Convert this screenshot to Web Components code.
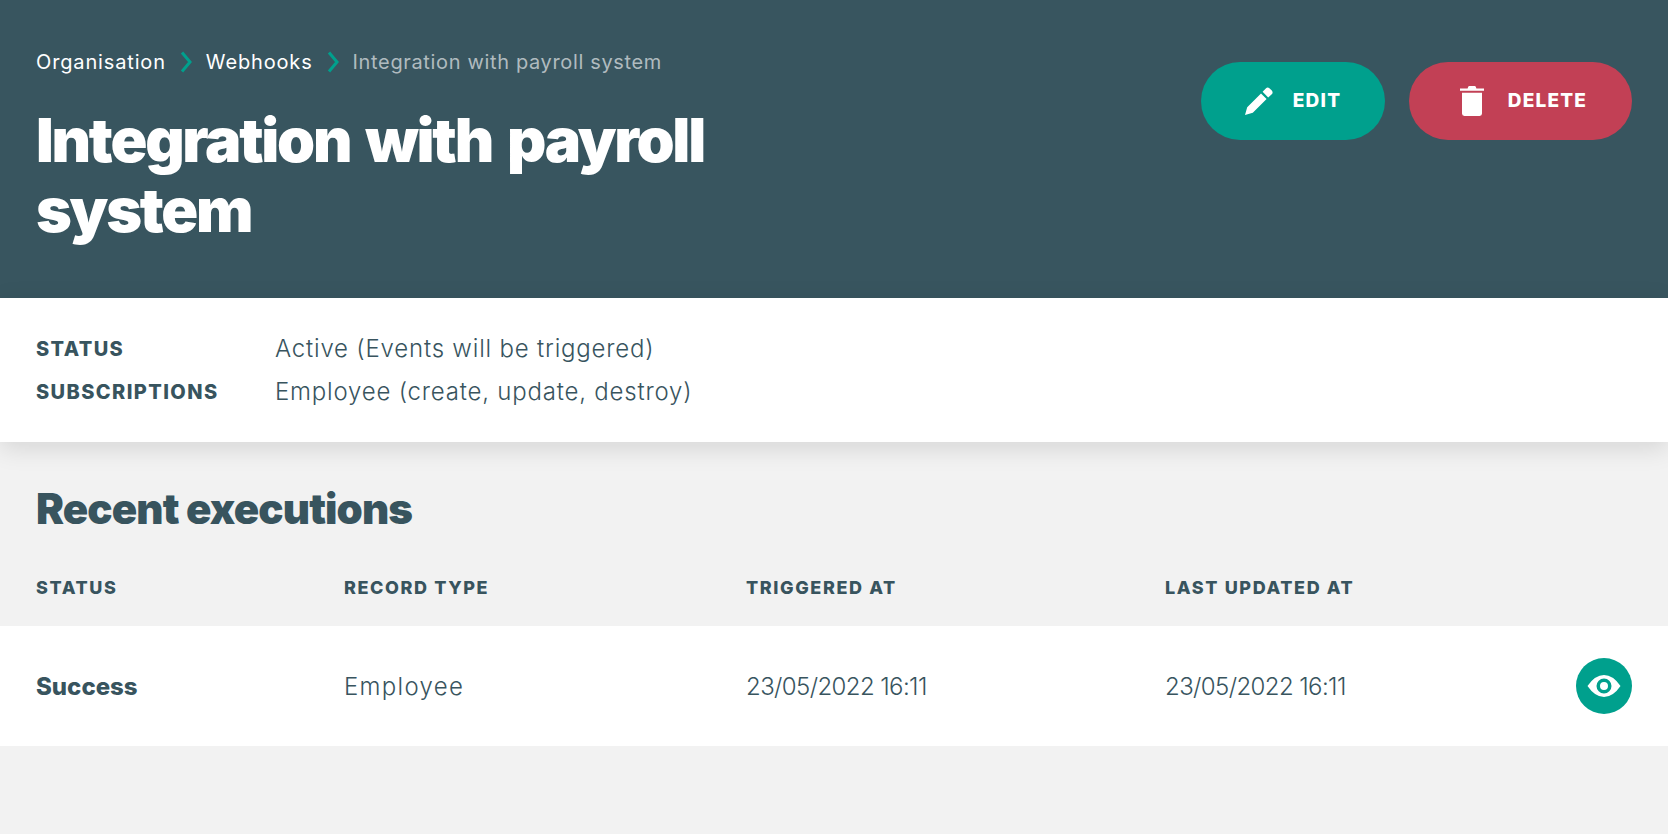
<!DOCTYPE html>
<html lang="en">
<head>
<meta charset="utf-8">
<title>Integration with payroll system</title>
<style>
    html, body {
        margin: 0;
        height: 100%;
        background: #f2f2f2;
    }
    body {
        font-family: "Inter", "Liberation Sans", sans-serif;
        color: #38545e;
    }
</style>
</head>
<body>
<page-header>
    <bread-crumbs slot="crumbs"></bread-crumbs>
    <pill-button slot="actions" kind="edit">Edit</pill-button>
    <pill-button slot="actions" kind="delete">Delete</pill-button>
    Integration with payroll system
</page-header>
<webhook-details></webhook-details>
<executions-table></executions-table>

<script>
class PageHeader extends HTMLElement {
    constructor() {
        super();
        this.attachShadow({ mode: 'open' });
        this.shadowRoot.innerHTML = `
            <style>
                :host {
                    display: flex;
                    justify-content: space-between;
                    align-items: flex-start;
                    box-sizing: border-box;
                    height: 298px;
                    padding: 49px 36px 0;
                    background: #38555f;
                    color: #fff;
                }
                h1 {
                    margin: 30px 0 0;
                    width: 700px;
                    font-size: 61px;
                    line-height: 70px;
                    font-weight: 900;
                    letter-spacing: -2.25px;
                    word-spacing: 5px;
                }
                .actions {
                    display: flex;
                    gap: 24px;
                    margin-top: 13px;
                }
            </style>
            <div>
                <slot name="crumbs"></slot>
                <h1><slot></slot></h1>
            </div>
            <div class="actions"><slot name="actions"></slot></div>
        `;
    }
}

class BreadCrumbs extends HTMLElement {
    constructor() {
        super();
        this.attachShadow({ mode: 'open' });
        const chevron = `<svg width="12" height="22" viewBox="0 0 12 22"><path d="M2 1.5 L10 11 L2 20.5" fill="none" stroke="#00a08d" stroke-width="3"/></svg>`;
        this.shadowRoot.innerHTML = `
            <style>
                :host {
                    display: flex;
                    align-items: center;
                    gap: 14px;
                    height: 26px;
                    font-size: 20px;
                    line-height: 26px;
                    letter-spacing: 0.85px;
                }
                .current {
                    color: #b0bbbf;
                    letter-spacing: 0.65px;
                }
            </style>
            <span>Organisation</span>${chevron}
            <span>Webhooks</span>${chevron}
            <span class="current">Integration with payroll system</span>
        `;
    }
}

class PillButton extends HTMLElement {
    constructor() {
        super();
        this.attachShadow({ mode: 'open' });
    }

    connectedCallback() {
        const isEdit = this.getAttribute('kind') === 'edit';
        const icon = isEdit
            ? `<svg width="28" height="28" viewBox="0 0 28 28"><path d="M0 28 L2.2 20.2 L16 6.4 L21.6 12 L7.8 25.8 Z M17.6 4.8 L20.8 1.4 Q22.6 -0.2 24.4 1.2 L26.8 3.6 Q28.4 5.4 26.8 7.2 L23.2 10.4 Z" fill="#fff"/></svg>`
            : `<svg width="24" height="30" viewBox="0 0 24 30"><path d="M0 2.4 L7.6 2.4 L8.2 0.8 Q8.5 0 9.4 0 L14.6 0 Q15.5 0 15.8 0.8 L16.4 2.4 L24 2.4 L24 4.8 L0 4.8 Z M2 6.8 L22 6.8 L22 27.6 Q22 30 19.6 30 L4.4 30 Q2 30 2 27.6 Z" fill="#fff"/></svg>`;
        this.shadowRoot.innerHTML = `
            <style>
                :host {
                    display: flex;
                    align-items: center;
                    justify-content: center;
                    box-sizing: border-box;
                    height: 78px;
                    width: ${isEdit ? 184 : 223}px;
                    gap: ${isEdit ? 20 : 24}px;
                    padding-left: ${isEdit ? 0 : 6}px;
                    border-radius: 39px;
                    background: ${isEdit ? '#00a08d' : '#c24055'};
                    color: #fff;
                    font-size: 19px;
                    font-weight: 800;
                    letter-spacing: 1.2px;
                    text-transform: uppercase;
                }
                svg { display: block; }
                span { position: relative; top: -1px; }
            </style>
            ${icon}<span><slot></slot></span>
        `;
    }
}

class WebhookDetails extends HTMLElement {
    constructor() {
        super();
        this.attachShadow({ mode: 'open' });
        this.shadowRoot.innerHTML = `
            <style>
                :host {
                    display: grid;
                    grid-template-columns: 239px 1fr;
                    row-gap: 15px;
                    align-content: center;
                    box-sizing: border-box;
                    height: 144px;
                    padding: 0 36px;
                    background: #fff;
                    box-shadow: 0 6px 24px rgba(0,0,0,0.12);
                    position: relative;
                    font-size: 24px;
                    line-height: 28px;
                    color: #38545e;
                }
                span {
                    font-weight: 350;
                    letter-spacing: 0.8px;
                }
                b {
                    font-size: 20px;
                    font-weight: 800;
                    letter-spacing: 1.4px;
                }
            </style>
            <b>STATUS</b><span>Active (Events will be triggered)</span>
            <b>SUBSCRIPTIONS</b><span>Employee (create, update, destroy)</span>
        `;
    }
}

class ExecutionsTable extends HTMLElement {
    constructor() {
        super();
        this.attachShadow({ mode: 'open' });
        this.shadowRoot.innerHTML = `
            <style>
                :host {
                    display: block;
                    color: #38545e;
                }
                h2 {
                    margin: 0;
                    padding: 37px 36px 0;
                    font-size: 42px;
                    line-height: 60px;
                    font-weight: 900;
                    letter-spacing: -0.9px;
                }
                .row {
                    display: grid;
                    grid-template-columns: 308px 402px 419px 1fr 56px;
                    align-items: center;
                    box-sizing: border-box;
                    padding: 0 36px;
                }
                .head {
                    height: 87px;
                    padding-top: 9px;
                    font-size: 18px;
                    font-weight: 800;
                    letter-spacing: 1.6px;
                }
                .body {
                    height: 120px;
                    background: #fff;
                    font-size: 24px;
                    font-weight: 350;
                }
                .record { letter-spacing: 1.3px; }
                .date { letter-spacing: -0.6px; }
                b { font-weight: 800; }
                .view {
                    display: flex;
                    align-items: center;
                    justify-content: center;
                    width: 56px;
                    height: 56px;
                    border-radius: 50%;
                    background: #00a08d;
                }
            </style>
            <h2>Recent executions</h2>
            <div class="row head">
                <span>STATUS</span><span>RECORD TYPE</span><span>TRIGGERED AT</span><span>LAST UPDATED AT</span><span></span>
            </div>
            <div class="row body">
                <b>Success</b><span class="record">Employee</span><span class="date">23/05/2022 16:11</span><span class="date">23/05/2022 16:11</span>
                <div class="view">
                    <svg width="34" height="24" viewBox="0 0 34 24"><path fill-rule="evenodd" d="M0.5 12 Q8 1 17 1 Q26 1 33.5 12 Q26 23 17 23 Q8 23 0.5 12 Z M17 4.5 A7.5 7.5 0 1 0 17 19.5 A7.5 7.5 0 1 0 17 4.5 Z M17 8 A4 4 0 1 1 17 16 A4 4 0 1 1 17 8 Z" fill="#fff"/></svg>
                </div>
            </div>
        `;
    }
}

customElements.define('page-header', PageHeader);
customElements.define('bread-crumbs', BreadCrumbs);
customElements.define('pill-button', PillButton);
customElements.define('webhook-details', WebhookDetails);
customElements.define('executions-table', ExecutionsTable);
</script>
</body>
</html>
